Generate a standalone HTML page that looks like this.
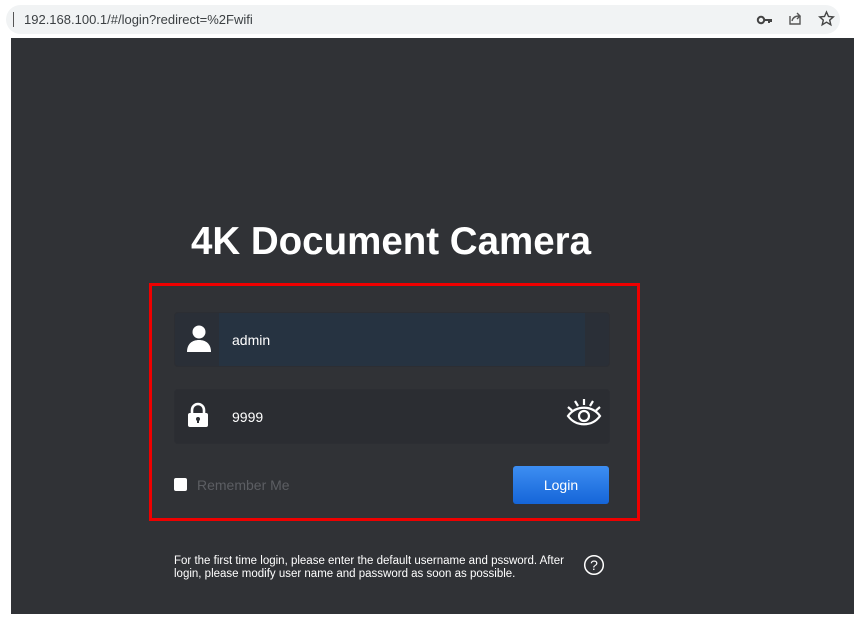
<!DOCTYPE html>
<html><head><meta charset="utf-8"><style>
html,body{margin:0;padding:0;width:860px;height:621px;background:#fff;overflow:hidden;font-family:"Liberation Sans",Arial,sans-serif;position:relative}
.bar{position:absolute;left:6px;top:5px;width:834px;height:29px;background:#f1f3f4;border-radius:15px}
.url{position:absolute;left:24px;top:12px;font-size:13px;color:#3c4043}
.cur{position:absolute;left:13px;top:12px;width:1px;height:15px;background:#555}
.main{position:absolute;left:11px;top:38px;width:843px;height:576px;background:#303236}
.title{position:absolute;left:0;width:760px;top:182px;text-align:center;font-size:38.5px;font-weight:bold;color:#fff;white-space:nowrap}
.red{position:absolute;left:149px;top:283px;width:485px;height:232px;border:3px solid #ee0000}
.f{position:absolute;left:174px;width:434px;border-radius:4px;border:1px solid #2c2e33}
.f1{top:312px;height:53px;background:#2a2f37}
.f1 .hl{position:absolute;left:44px;top:0;width:366px;height:53px;background:#263341}
.f2{top:389px;height:53px;background:#2b2d32}
.t{position:absolute;left:57px;top:19px;color:#fff;font-size:14px}
.cb{position:absolute;left:174px;top:478px;width:13px;height:13px;background:#fff;border-radius:2px}
.rm{position:absolute;left:197px;top:477px;color:#5c5e63;font-size:14px}
.btn{position:absolute;left:513px;top:466px;width:96px;height:38px;border-radius:3px;background:linear-gradient(#3d8ef2,#1565d8);color:#fff;font-size:14px;text-align:center;line-height:38px}
.help{position:absolute;left:174px;top:555px;font-size:11.5px;line-height:13px;color:#fff;white-space:nowrap}
</style></head><body>
<div class="bar"></div><div class="cur"></div>
<div class="url">192.168.100.1/#/login?redirect=%2Fwifi</div>
<svg style="position:absolute;left:756px;top:12px" width="18" height="14"><circle cx="5" cy="8" r="3.2" fill="none" stroke="#444" stroke-width="2"/><path d="M8 8h8M13 8v3M15 8v2" stroke="#444" stroke-width="2"/></svg>
<svg style="position:absolute;left:787px;top:10px" width="16" height="17" fill="none" stroke="#555" stroke-width="1.4"><path d="M3 6v8h10V6"/><path d="M5 11c1-4 4-5 7-5M10 3l3 3-3 3"/></svg>
<svg style="position:absolute;left:818px;top:10px" width="17" height="17"><path d="M8.5 2l2 4.5 4.8.4-3.6 3.2 1.1 4.7-4.3-2.6-4.3 2.6 1.1-4.7L1.7 6.9l4.8-.4z" fill="none" stroke="#444" stroke-width="1.4"/></svg>
<div class="main"><div class="title">4K Document Camera</div></div>
<div class="red"></div>
<div class="f f1"><div class="hl"></div>
<svg style="position:absolute;left:11px;top:12px" width="26" height="28"><circle cx="13" cy="7" r="6.5" fill="#fff"/><path d="M1 27c0-8 5-12 12-12s12 4 12 12z" fill="#fff"/></svg>
<div class="t">admin</div></div>
<div class="f f2">
<svg style="position:absolute;left:12px;top:12px" width="22" height="26"><path d="M5 12V8a6 6 0 0 1 12 0v4" fill="none" stroke="#fff" stroke-width="2.6"/><rect x="1" y="11" width="20" height="14" rx="2" fill="#fff"/><circle cx="11" cy="17" r="2" fill="#2b2d32"/><rect x="10" y="17" width="2" height="4" fill="#2b2d32"/></svg>
<div class="t">9999</div>
<svg style="position:absolute;left:391px;top:7px" width="36" height="32" fill="none" stroke="#fff" stroke-width="2.2"><path d="M2 19c8-11 24-11 32 0c-8 11-24 11-32 0z"/><circle cx="18" cy="19" r="5"/><path d="M18 2v6M9 4l3 5M27 4l-3 5M2 10l4 3.5M34 10l-4 3.5"/></svg>
</div>
<div class="cb"></div><div class="rm">Remember Me</div>
<div class="btn">Login</div>
<div class="help">For the first time login, please enter the default username and pssword. After<br>login, please modify user name and password as soon as possible.</div>
<svg style="position:absolute;left:583px;top:554px" width="22" height="22"><circle cx="11" cy="11" r="9.3" fill="none" stroke="#fff" stroke-width="1.5"/><text x="11" y="16" font-size="14" fill="#fff" text-anchor="middle" font-family="Liberation Sans">?</text></svg>
</body></html>
